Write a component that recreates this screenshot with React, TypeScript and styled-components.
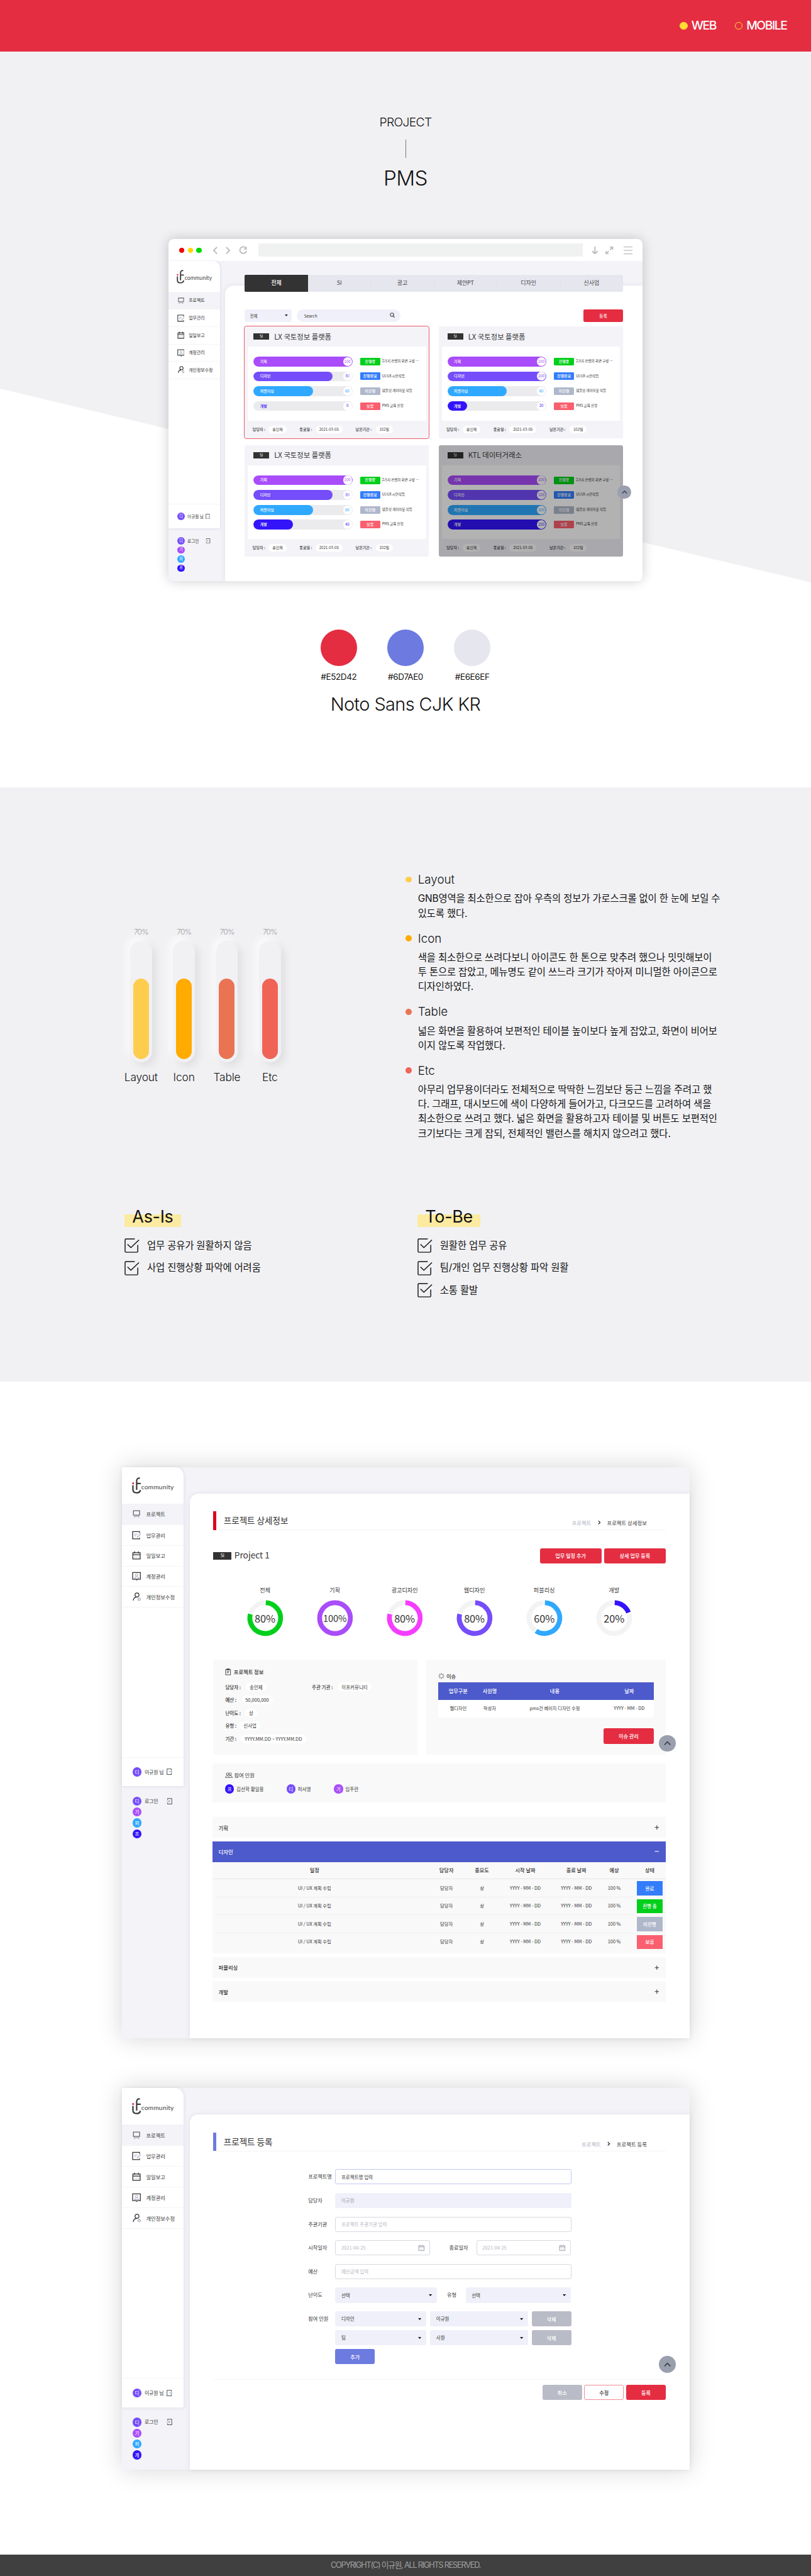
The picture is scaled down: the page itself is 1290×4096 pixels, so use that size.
import React from "react";
import styled, { createGlobalStyle } from "styled-components";

const KR = `"Noto Sans CJK KR", "Noto Sans", sans-serif`;
const MAIN = `Inter, "Noto Sans CJK KR", sans-serif`;

const C = {
  red: "#e52d42",
  blue: "#6d7ae0",
  navy: "#4d5acb",
  mist: "#f1f1f4",
  shell: "#f3f3f8",
  field: "#f0f0fa",
  purple: "#a94dfa",
  violet: "#754dfa",
  sky: "#2fa8ff",
  indigo: "#3314fa",
  pink: "#f53dff",
  green: "#00cf1b",
  azure: "#347dfa",
  slate: "#afb7cb",
  coral: "#fa5f6f",
};

const GlobalStyle = createGlobalStyle`
  *, *::before, *::after { box-sizing: border-box; }
  html, body { margin: 0; padding: 0; background: #fff; }
  svg { display: block; flex: none; }
`;

/* The board is designed 1340px wide and shown at 1290px. */
const Page = styled.div`
  zoom: 0.96269;
  width: 1340px;
  height: 4255px;
  overflow: hidden;
  display: flex;
  flex-direction: column;
  background: #fff;
  font-family: ${MAIN};
  color: #111;
  line-height: 1;
  white-space: nowrap;
`;

/* ---------- top bar ---------- */

const TopBar = styled.header`
  flex: none;
  height: 85px;
  padding: 0 40px;
  display: flex;
  align-items: center;
  justify-content: flex-end;
  gap: 31px;
  background: ${C.red};
`;

const Platform = styled.span`
  display: flex;
  align-items: center;
  gap: 6px;
  color: #fff;
  font-size: 20px;
  font-weight: 500;
  letter-spacing: -1.45px;
`;

const PlatformDot = styled.i<{ $on?: boolean }>`
  width: 13px;
  height: 13px;
  border-radius: 50%;
  border: 1px solid #ffdd33;
  background: ${(p) => (p.$on ? "#ffdd33" : "transparent")};
`;

/* ---------- hero ---------- */

const Hero = styled.section`
  flex: none;
  height: 1216px;
  padding-top: 107px;
  display: flex;
  flex-direction: column;
  align-items: center;
  position: relative;
  isolation: isolate;

  &::before {
    content: "";
    position: absolute;
    inset: 0;
    z-index: -1;
    background: ${C.mist};
    clip-path: polygon(0 0, 100% 0, 100% 877px, 0 557px);
  }
`;

const Eyebrow = styled.p`
  margin: 0;
  font-size: 20px;
  line-height: 20px;
  font-weight: 300;
  letter-spacing: -0.65px;
`;

const Stem = styled.i`
  width: 1px;
  height: 30px;
  margin: 19px 0 15px;
  background: #777;
`;

const HeroTitle = styled.h1`
  margin: 0 0 83px;
  font-size: 34.5px;
  line-height: 36px;
  font-weight: 300;
  letter-spacing: -0.6px;
`;

const Swatches = styled.div`
  margin-top: 80px;
  display: flex;
  gap: 50.3px;
`;

const Swatch = styled.div<{ $c: string }>`
  width: 60px;
  display: flex;
  flex-direction: column;
  align-items: center;
  gap: 11px;
  font-size: 14px;
  line-height: 14px;
  letter-spacing: -0.4px;

  &::before {
    content: "";
    width: 60px;
    height: 60px;
    border-radius: 50%;
    background: ${(p) => p.$c};
  }
`;

const FontName = styled.p`
  margin: 23px 0 0;
  font-size: 30px;
  line-height: 32px;
  font-weight: 300;
  letter-spacing: -0.6px;
`;

/* ---------- browser window ---------- */

const Browser = styled.div`
  flex: none;
  width: 784px;
  height: 565.3px;
  border-radius: 9px;
  overflow: hidden;
  background: #fff;
  box-shadow: 0 0 20px rgba(0, 0, 0, 0.2);
  display: flex;
  flex-direction: column;
`;

const ChromeBar = styled.div`
  flex: none;
  height: 36.5px;
  padding: 0 16.5px 0 18px;
  display: flex;
  align-items: center;
`;

const Light = styled.i<{ $c: string }>`
  width: 8.6px;
  height: 8.6px;
  margin-right: 5.6px;
  border-radius: 50%;
  background: ${(p) => p.$c};
`;

const Address = styled.div`
  flex: 1;
  height: 22.2px;
  margin: 0 13.5px 0 18px;
  background: #f0f2f1;
`;

const ChromeIcon = styled.svg<{ $w: number; $ml?: number }>`
  width: ${(p) => p.$w}px;
  height: ${(p) => p.$w}px;
  margin-left: ${(p) => p.$ml ?? 0}px;
  fill: none;
  stroke: #bdbdbd;
  stroke-width: 2;
`;

/* ---------- application frame ---------- */

const AppFrame = styled.div<{ $h?: number }>`
  position: relative;
  display: flex;
  width: 100%;
  ${(p) => (p.$h ? `height: ${p.$h}px; flex: none;` : "flex: 1;")}
  background: ${C.shell};
  font-family: ${KR};
  color: #333;
`;

const Aside = styled.aside<{ $scale?: number }>`
  zoom: ${(p) => p.$scale ?? 1};
  flex: none;
  width: 102.7px;
`;

const AsideMain = styled.div`
  height: 527.3px;
  display: flex;
  flex-direction: column;
  background: #fff;
  border-top-right-radius: 14px;
  box-shadow: 1px 1px 5px rgba(90, 90, 130, 0.12);
`;

const LogoBox = styled.div`
  height: 60.3px;
  padding: 17px 0 0 17px;
  display: flex;
`;

const LogoWord = styled.span`
  margin: 10.4px 0 0 0.4px;
  font-family: Lato, sans-serif;
  font-size: 10.8px;
  line-height: 12px;
  letter-spacing: 0.1px;
  color: #444;
`;

const MenuItem = styled.div<{ $on?: boolean }>`
  height: ${(p) => (p.$on ? 35.4 : 34.2)}px;
  padding-left: 17.3px;
  display: flex;
  align-items: center;
  gap: 8.4px;
  font-size: 8.6px;
  background: ${(p) => (p.$on ? C.shell : "#fff")};
  border-bottom: 0.8px solid #f4f4f6;
`;

const Account = styled.div<{ $line?: boolean }>`
  display: flex;
  align-items: center;
  height: ${(p) => (p.$line ? 48.3 : 18)}px;
  margin-top: ${(p) => (p.$line ? "auto" : "0")};
  padding: 0 19px 0 18px;
  border-top: ${(p) => (p.$line ? "0.8px solid #f4f4f6" : "0")};
  font-size: 8.2px;
`;

const AccountName = styled.span`
  flex: 1;
  padding-left: 5px;
`;

const Others = styled.div`
  padding-top: 15.6px;
`;

const Avatar = styled.i<{ $c: string }>`
  width: 14.8px;
  height: 14.8px;
  border-radius: 50%;
  display: flex;
  align-items: center;
  justify-content: center;
  background: ${(p) => p.$c};
  color: #fff;
  font-size: 7.8px;
  font-style: normal;
`;

const Panel = styled.main<{ $top: number; $left: number; $pad: string }>`
  flex: 1;
  min-width: 0;
  margin: ${(p) => p.$top}px 0 0 ${(p) => p.$left}px;
  padding: ${(p) => p.$pad};
  background: #fff;
  border-top-left-radius: 14px;
  box-shadow: 0 0 8px rgba(90, 90, 130, 0.14);
`;

const ToTop = styled.button<{ $x: number; $y: number; $d: number }>`
  position: absolute;
  left: ${(p) => p.$x - p.$d / 2}px;
  top: ${(p) => p.$y - p.$d / 2}px;
  width: ${(p) => p.$d}px;
  height: ${(p) => p.$d}px;
  padding: 0;
  border: 0;
  border-radius: 50%;
  display: flex;
  align-items: center;
  justify-content: center;
  background: #9a9fae;

  svg {
    width: 50%;
    height: 50%;
  }
`;

/* ---------- dashboard ---------- */

const Tabs = styled.nav`
  margin-top: -17.5px;
  height: 28.5px;
  display: flex;
  border-radius: 2px;
  overflow: hidden;
  background: #e6e6ef;
`;

const Tab = styled.span<{ $on?: boolean; $bar?: boolean }>`
  flex: 1;
  display: flex;
  align-items: center;
  justify-content: center;
  font-size: 9.3px;
  color: ${(p) => (p.$on ? "#fff" : "#444")};
  font-weight: ${(p) => (p.$on ? 500 : 400)};
  background: ${(p) =>
    p.$on
      ? "#333"
      : p.$bar
        ? "linear-gradient(#dfdfe8, #dfdfe8) left center / 1px 10px no-repeat"
        : "none"};
`;

const FilterRow = styled.div`
  margin: 28.5px 0 8px;
  height: 20.7px;
  display: flex;
  font-size: 6.8px;
`;

const FilterSelect = styled.div`
  width: 77.5px;
  padding: 0 6px 0 8.5px;
  display: flex;
  align-items: center;
  justify-content: space-between;
  border-radius: 3px;
  background: ${C.field};
`;

const SearchBox = styled.div`
  width: 171.5px;
  margin: 0 auto 0 8.3px;
  padding: 0 9px 0 12.3px;
  display: flex;
  align-items: center;
  justify-content: space-between;
  border-radius: 11px;
  background: ${C.field};
`;

const FilterButton = styled.button`
  width: 65.3px;
  border: 0;
  padding: 0;
  border-radius: 2.5px;
  background: ${C.red};
  color: #fff;
  font: 500 6.9px ${KR};
`;

const Cards = styled.div`
  display: grid;
  grid-template-columns: 304.4px 304.4px;
  column-gap: 16px;
  row-gap: 12px;
`;

const Card = styled.article<{ $active?: boolean; $dim?: boolean }>`
  position: relative;
  height: 184px;
  padding: 0 5px;
  border-radius: 3px;
  background: ${C.shell};
  outline: ${(p) => (p.$active ? "1px solid #ee5b6c" : "0")};

  &::after {
    content: "";
    position: absolute;
    inset: 0;
    border-radius: 3px;
    background: ${(p) => (p.$dim ? "rgba(0, 0, 0, 0.3)" : "transparent")};
  }
`;

const CardHead = styled.header`
  height: 33px;
  padding-left: 9.4px;
  display: flex;
  align-items: center;
  gap: 8.3px;
  font-size: 11.8px;
`;

const Badge = styled.span<{ $w: number; $h: number }>`
  width: ${(p) => p.$w}px;
  height: ${(p) => p.$h}px;
  display: flex;
  align-items: center;
  justify-content: center;
  background: #333;
  color: #fff;
  font-size: ${(p) => p.$w * 0.235}px;
`;

const CardBody = styled.div`
  height: 122px;
  padding: 16.3px 9.3px 0;
  display: flex;
  flex-direction: column;
  gap: 8px;
  background: #fff;
`;

const TaskRow = styled.div`
  height: 16.5px;
  display: flex;
  align-items: center;
  font-size: 5.7px;
`;

const Track = styled.div`
  position: relative;
  width: 163.6px;
  height: 16.4px;
  margin-right: 12.4px;
  border-radius: 9px;
  background: #ebebee;
  overflow: hidden;
`;

const Fill = styled.div<{ $c: string }>`
  height: 100%;
  border-radius: 9px;
  background: ${(p) => p.$c};
`;

const TrackOver = styled.div<{ $c: string; $dark?: boolean }>`
  position: absolute;
  inset: 0;
  padding: 0 1px 0 11px;
  display: flex;
  align-items: center;
  justify-content: space-between;
  font-size: 6.3px;
  font-weight: 500;
  color: ${(p) => (p.$dark ? p.$c : "#fff")};

  b {
    width: 14.6px;
    height: 14.6px;
    border-radius: 50%;
    display: flex;
    align-items: center;
    justify-content: center;
    background: #fff;
    color: ${(p) => p.$c};
    font-weight: 400;
  }
`;

const Tag = styled.span<{ $c: string }>`
  width: 33.6px;
  height: 12.5px;
  margin-right: 3.1px;
  border-radius: 1.5px;
  display: flex;
  align-items: center;
  justify-content: center;
  background: ${(p) => p.$c};
  color: #fff;
  font-size: 6.3px;
  font-weight: 500;
`;

const CardFoot = styled.footer`
  height: 29px;
  padding-left: 8px;
  display: grid;
  grid-template-columns: 77.4px 92.7px 1fr;
  align-items: center;
  font-size: 6.3px;
`;

const Pair = styled.span<{ $gap: number; $w?: number }>`
  display: flex;
  align-items: center;
  gap: ${(p) => p.$gap}px;
  font-weight: 500;
  width: ${(p) => (p.$w ? `${p.$w}px` : "auto")};
`;

const Pill = styled.span<{ $h: number; $px: number }>`
  height: ${(p) => p.$h}px;
  padding: 0 ${(p) => p.$px}px;
  border-radius: ${(p) => p.$h / 2}px;
  display: flex;
  align-items: center;
  background: #fff;
  font-weight: 400;
`;

/* ---------- notes ---------- */

const Notes = styled.section`
  flex: none;
  height: 981px;
  padding: 139.8px 0 0 206px;
  background: ${C.mist};
`;

const NotesTop = styled.div`
  height: 553px;
  display: flex;
`;

const Gauges = styled.div`
  width: 464px;
  padding-top: 91px;
  display: flex;
  gap: 11px;
`;

const Gauge = styled.figure`
  margin: 0 0 0 -3px;
  width: 60px;
  display: flex;
  flex-direction: column;
  align-items: center;
  font-size: 18px;
  line-height: 20px;
  font-weight: 300;
  letter-spacing: -0.15px;

  & + & {
    margin-left: 0;
  }

  small {
    font-size: 12.6px;
    line-height: 14px;
    margin-bottom: 8.5px;
    letter-spacing: -0.9px;
    font-weight: 300;
    color: #999;
  }
`;

const Tube = styled.div`
  width: 36px;
  height: 200px;
  margin-bottom: 14.5px;
  padding: 5px;
  border-radius: 18px;
  display: flex;
  align-items: flex-end;
  background: ${C.mist};
  box-shadow: 6px 6px 14px rgba(0, 0, 0, 0.08), -6px -6px 14px rgba(255, 255, 255, 0.75);
`;

const Liquid = styled.div<{ $c: string }>`
  width: 26px;
  height: 70%;
  border-radius: 13px;
  background: ${(p) => p.$c};
`;

const NoteList = styled.div`
  display: flex;
  flex-direction: column;
  gap: 17.4px;
`;

const Note = styled.article<{ $c: string }>`
  position: relative;
  padding-left: 20.5px;

  &::before {
    content: "";
    position: absolute;
    left: 0;
    top: 7px;
    width: 10px;
    height: 10px;
    border-radius: 50%;
    background: ${(p) => p.$c};
  }

  h3 {
    margin: 0 0 7.5px;
    font-size: 19.5px;
    line-height: 24px;
    font-weight: 300;
    letter-spacing: 0;
  }

  p {
    margin: 0;
    font-size: 16px;
    line-height: 24.1px;
    font-weight: 400;
    letter-spacing: -0.16px;
    white-space: pre;
  }
`;

const Compare = styled.div`
  display: grid;
  grid-template-columns: 484px 1fr;
`;

const CompareTitle = styled.h2`
  margin: 0 0 17.5px;
  width: max-content;
  padding: 0 12.5px;
  font-size: 28px;
  line-height: 34px;
  font-weight: 400;
  letter-spacing: -0.3px;
  background: linear-gradient(#fbeaa0, #fbeaa0) 0 12px / 100% 21px no-repeat;
`;

const Check = styled.div`
  height: 24px;
  margin-bottom: 13px;
  display: flex;
  align-items: center;
  gap: 12.5px;
  font-size: 16px;
  font-weight: 400;
  letter-spacing: -0.15px;
`;

/* ---------- screens ---------- */

const Screens = styled.section`
  flex: 1;
  padding-top: 141px;
  display: flex;
  flex-direction: column;
  align-items: center;
  gap: 82.2px;
`;

const Screen = styled.div`
  width: 938px;
  box-shadow: 0 0 38px rgba(0, 0, 0, 0.17);
`;

const TitleRow = styled.div<{ $c: string }>`
  height: 31px;
  padding: 0 31.3px 0 12px;
  border-left: 5.3px solid ${(p) => p.$c};
  display: flex;
  align-items: center;
  justify-content: space-between;
  font-size: 14.1px;
  background: linear-gradient(#f5f5f6, #f5f5f6) bottom / 100% 1px no-repeat;
`;

const Crumbs = styled.span`
  display: flex;
  align-items: center;
  gap: 10.5px;
  padding-top: 7px;
  font-size: 8.7px;

  span:first-child {
    color: #a9aebd;
  }
`;

const ProjectRow = styled.div`
  margin-top: 30px;
  height: 25px;
  display: flex;
  align-items: center;
  gap: 4.6px;
  font-size: 14.2px;
`;

const ProjectName = styled.span`
  flex: 1;
  padding-bottom: 1px;
`;

type Tone = "red" | "gray" | "blue" | "line";
const Btn = styled.button<{ $w: number; $tone?: Tone }>`
  width: ${(p) => p.$w}px;
  height: 25px;
  padding: 0;
  border-radius: 3px;
  font: 500 8.5px ${KR};
  border: ${(p) => (p.$tone === "line" ? "0.9px solid #f08c98" : "0")};
  color: ${(p) => (p.$tone === "line" ? "#333" : "#fff")};
  background: ${(p) =>
    ({ red: C.red, gray: "#b9bbc6", blue: C.blue, line: "#fff" })[p.$tone ?? "red"]};
`;

const Donuts = styled.div`
  margin-top: 39px;
  padding-left: 28px;
  display: flex;
`;

const DonutCell = styled.div`
  width: 115.33px;
  display: flex;
  flex-direction: column;
  align-items: center;
  gap: 11px;
  font-size: 9.5px;
  line-height: 11px;
`;

const DonutBox = styled.div<{ $full: boolean }>`
  display: grid;
  place-items: center;
  font-size: ${(p) => (p.$full ? 15.2 : 17)}px;
  letter-spacing: -0.1px;

  > * {
    grid-area: 1 / 1;
  }
`;

const InfoGrid = styled.div`
  margin-top: 38px;
  display: grid;
  grid-template-columns: 337.7px 396px;
  justify-content: space-between;
`;

const InfoCard = styled.div<{ $pt: number }>`
  height: 157px;
  padding: ${(p) => p.$pt}px 19.7px 0 20px;
  border-radius: 2px;
  background: #f9f9f9;
  font-size: 7.8px;
`;

const CardTitle = styled.div<{ $gap: number; $w?: number; $mb: number }>`
  height: 12px;
  margin-bottom: ${(p) => p.$mb}px;
  display: flex;
  align-items: center;
  gap: ${(p) => p.$gap}px;
  font-size: 8.6px;
  font-weight: ${(p) => p.$w ?? 500};
`;

const InfoLine = styled.div`
  display: flex;
  height: 21.4px;
  align-items: center;
`;

const IssueRow = styled.div<{ $head?: boolean }>`
  height: 29.2px;
  padding-left: 6.6px;
  display: grid;
  grid-template-columns: 53px 51px 164px 82px;
  align-items: center;
  text-align: center;
  background: ${(p) => (p.$head ? C.navy : "#fff")};
  color: ${(p) => (p.$head ? "#fff" : "#333")};
  font-size: ${(p) => (p.$head ? 8.5 : 7.6)}px;
  font-weight: ${(p) => (p.$head ? 500 : 400)};
`;

const Right = styled.div<{ $mt: number; $gap?: number }>`
  margin-top: ${(p) => p.$mt}px;
  display: flex;
  justify-content: flex-end;
  gap: ${(p) => p.$gap ?? 0}px;
`;

const People = styled.div`
  margin: 14.5px 0 24.3px -1.3px;
  height: 64.7px;
  padding: 13.5px 0 0 21px;
  border-radius: 2px;
  background: #f9f9f9;
`;

const PeopleRow = styled.div`
  display: grid;
  grid-template-columns: 101.3px 78.7px 100px;
  font-size: 7.9px;
`;

const Person = styled.span`
  display: flex;
  align-items: center;
  gap: 3.8px;
`;

const Accordion = styled.div`
  margin-left: -1.3px;
  display: flex;
  flex-direction: column;
  gap: 5.8px;
`;

const AccHead = styled.div<{ $open?: boolean }>`
  height: 34.1px;
  padding: 0 11px 0 10px;
  display: flex;
  align-items: center;
  justify-content: space-between;
  background: ${(p) => (p.$open ? C.navy : "#f9f9f9")};
  color: ${(p) => (p.$open ? "#fff" : "#333")};
  font-size: 8.7px;
  font-weight: 500;
`;

const PlanTable = styled.div`
  height: 151.4px;
  background: #f9f9f9;
`;

const PlanRow = styled.div<{ $head?: boolean; $last?: boolean }>`
  height: ${(p) => (p.$head ? 28.8 : 29.6)}px;
  display: grid;
  grid-template-columns: 337.4px 8.8px 81px 36.2px 107.2px 61.4px 64px 1fr;
  align-items: center;
  text-align: center;
  font-size: ${(p) => (p.$head ? 8.5 : 7.6)}px;
  font-weight: ${(p) => (p.$head ? 500 : 400)};
  background: ${(p) =>
    p.$head
      ? "linear-gradient(#e6e6e8, #e6e6e8) bottom / 100% 1px no-repeat"
      : p.$last
        ? "none"
        : "linear-gradient(#efeff1, #efeff1) 5px bottom / 691px 1px no-repeat"};
`;

const State = styled.span<{ $c: string }>`
  justify-self: center;
  width: 42.3px;
  height: 23.6px;
  display: flex;
  align-items: center;
  justify-content: center;
  background: ${(p) => p.$c};
  color: #fff;
  font-size: 7.8px;
  font-weight: 500;
`;

/* ---------- form ---------- */

const Form = styled.div`
  margin: 30px 0 0 157px;
  width: 434.7px;
  display: flex;
  flex-direction: column;
  gap: 14.1px;
`;

const FormRow = styled.div`
  display: grid;
  grid-template-columns: 44.7px 1fr;
  font-size: 8.5px;
`;

const FormLabel = styled.label`
  height: 25px;
  display: flex;
  align-items: center;
`;

const Line = styled.div<{ $gap?: number }>`
  display: flex;
  align-items: center;
  gap: ${(p) => p.$gap ?? 0}px;

  & + & {
    margin-top: 6.3px;
  }
`;

const SideLabel = styled.span<{ $l: number; $w: number }>`
  width: ${(p) => p.$w}px;
  padding-left: ${(p) => p.$l}px;
`;

type Kind = "focus" | "plain" | "fill" | "select";
const Field = styled.div<{ $kind: Kind; $w?: number }>`
  width: ${(p) => (p.$w ? `${p.$w}px` : "100%")};
  height: 25px;
  padding: 0 8px 0 ${(p) => (p.$kind === "select" || p.$kind === "fill" ? 10 : 9)}px;
  display: flex;
  align-items: center;
  justify-content: space-between;
  border-radius: 3px;
  font-size: 7.8px;
  border: ${(p) =>
    p.$kind === "focus" ? "1px solid #c3c8f3" : p.$kind === "plain" ? "1px solid #d8d9df" : "0"};
  background: ${(p) => (p.$kind === "fill" || p.$kind === "select" ? C.field : "#fff")};
  color: ${(p) =>
    p.$kind === "plain" ? "#b4b8c3" : p.$kind === "fill" ? "#9da1ad" : "#333"};
`;

const Divider = styled.hr`
  margin: 24px 0 0;
  height: 1px;
  border: 0;
  background: #f5f5f6;
`;

const Foot = styled.footer`
  flex: none;
  height: 36px;
  display: flex;
  align-items: center;
  justify-content: center;
  background: #404040;
  color: #a0a0a0;
  font-size: 13.2px;
  letter-spacing: -1.25px;
`;

/* ---------- drawings ---------- */

const Logo = () => (
  <svg width="15" height="27" viewBox="0 0 45 81" fill="none" stroke="#3d3d3d" strokeWidth="7">
    <path d="M4.500 39v22c0 11 8 16 18 16 11 0 18-5 19-14" />
    <path d="M39 5c-10-2-16 3-16 13v44M23 31h20" />
    <rect x="1" y="25" width="9" height="9" rx="3" fill={C.red} stroke="none" />
  </svg>
);

const menuIcons = [
  <>
    <path d="M7 7h31v22H7z" stroke="#666" strokeWidth="4" />
    <path d="M10 35h26M15 35l-5 6M30 35l5 6" stroke="#a0a8ba" strokeWidth="4" />
  </>,
  <>
    <path d="M38 12V4H3v37h35v-6" stroke="#333" strokeWidth="4" />
    <path d="M11 17h16M11 25h10" stroke="#a0a8ba" strokeWidth="3" />
    <path d="M26 33l2-6 13-13 3 4-13 13z" stroke="#a0a8ba" strokeWidth="3" />
  </>,
  <>
    <path d="M4 9h37v32H4zM4 19h37M13 2v11M32 2v11" stroke="#2f2f2f" strokeWidth="4" />
    <path d="M11 31h4M20 31h4M30 31h4" stroke="#a0a8ba" strokeWidth="4" />
  </>,
  <>
    <path d="M3 4h39v34H27l-4 4-4-4H3z" stroke="#333" strokeWidth="4" />
    <circle cx="23" cy="16" r="6" stroke="#a0a8ba" strokeWidth="3" />
    <path d="M12 33c1-12 21-12 22 0z" stroke="#a0a8ba" strokeWidth="3" />
  </>,
  <>
    <circle cx="25" cy="13" r="10" stroke="#2f2f2f" strokeWidth="4" />
    <path d="M6 41c1-11 8-17 17-17" stroke="#2f2f2f" strokeWidth="4" />
    <circle cx="36" cy="34" r="6" stroke="#a0a8ba" strokeWidth="4" />
  </>,
];

const MenuIcon = ({ i }: { i: number }) => (
  <svg width="14.8" height="14.8" viewBox="0 0 45 45" fill="none">
    {menuIcons[i]}
  </svg>
);

const DoorIcon = ({ into }: { into?: boolean }) => (
  <svg width="9.6" height="10.5" viewBox="0 0 29 32" fill="none" strokeWidth="3.200">
    {into ? (
      <>
        <path d="M5 9V2h21v28H5v-7" stroke="#555" />
        <path d="M0 16h15M11 11l5 5-5 5" stroke="#a0a8ba" />
      </>
    ) : (
      <>
        <path d="M24 9V2H2v28h22v-7" stroke="#555" />
        <path d="M11 16h16M22 11l5 5-5 5" stroke="#a0a8ba" />
      </>
    )}
  </svg>
);

const Caret = ({ w = 5.4 }: { w?: number }) => (
  <svg width={w} height={w * 0.62} viewBox="0 0 10 6">
    <path d="M0 0h10L5 6z" fill="#222" />
  </svg>
);

const UpIcon = () => (
  <svg viewBox="0 0 20 20" fill="none" stroke="#3b3f4a" strokeWidth="2.600">
    <path d="M3 14l7-7 7 7" />
  </svg>
);

const CalendarIcon = () => (
  <svg width="11" height="11" viewBox="0 0 22 22" fill="none" stroke="#9a9fae" strokeWidth="2">
    <path d="M2 4h18v16H2zM2 8h18M7 1v4M15 1v4" />
    <path d="M6 15h2M10 15h2M14 15h2" />
  </svg>
);

const CheckIcon = () => (
  <svg width="24.500" height="24" viewBox="0 0 24.5 24" fill="none" stroke="#111" strokeWidth="1.500">
    <path d="M17 1H2.500Q1 1 1 2.500v19Q1 23 2.500 23h18q1.500 0 1.500-1.500V11" />
    <path d="M5 9.800l5.600 5.600L24 2.500" />
  </svg>
);

const Chevron = () => (
  <svg width="5" height="8" viewBox="0 0 5 8" fill="none" stroke="#333" strokeWidth="1.400">
    <path d="M.8 1.200L3.800 4 .8 6.800" />
  </svg>
);

const pt = (r: number, deg: number) => {
  const a = ((deg - 90) * Math.PI) / 180;
  return `${(30 + r * Math.cos(a)).toFixed(2)} ${(30 + r * Math.sin(a)).toFixed(2)}`;
};
const arc = (from: number, to: number) =>
  `M${pt(25.4, from)}A25.4 25.4 0 ${to - from > 180 ? 1 : 0} 1 ${pt(25.4, to)}`;

const Donut = ({ name, value, color }: { name: string; value: number; color: string }) => (
  <DonutCell>
    <span>{name}</span>
    <DonutBox $full={value === 100}>
      <svg width="60" height="60" viewBox="0 0 60 60" fill="none" strokeWidth="8">
        {value === 100 ? (
          <circle cx="30" cy="30" r="25.400" stroke={color} />
        ) : (
          <>
            <path d={arc(2, value * 3.6 - 3)} stroke={color} />
            <path d={arc(value * 3.6 + 1.5, 357)} stroke="#f3f3f3" />
          </>
        )}
      </svg>
      <span>{value}%</span>
    </DonutBox>
  </DonutCell>
);

/* ---------- composition ---------- */

const menu = ["프로젝트", "업무관리", "일일보고", "계정관리", "개인정보수정"];

const Sidebar = ({ last, scale }: { last: string; scale?: number }) => (
  <Aside $scale={scale}>
    <AsideMain>
      <LogoBox>
        <Logo />
        <LogoWord>community</LogoWord>
      </LogoBox>
      {menu.map((m, i) => (
        <MenuItem key={m} $on={i === 0}>
          <MenuIcon i={i} />
          {m}
        </MenuItem>
      ))}
      <Account $line>
        <Avatar $c={C.violet}>디</Avatar>
        <AccountName>이규원 님</AccountName>
        <DoorIcon />
      </Account>
    </AsideMain>
    <Others>
      <Account>
        <Avatar $c={C.violet}>디</Avatar>
        <AccountName>로그인</AccountName>
        <DoorIcon into />
      </Account>
      <Account>
        <Avatar $c={C.purple}>기</Avatar>
      </Account>
      <Account>
        <Avatar $c={C.sky}>퍼</Avatar>
      </Account>
      <Account>
        <Avatar $c={C.indigo}>{last}</Avatar>
      </Account>
    </Others>
  </Aside>
);

const tasks = [
  { name: "기획", color: C.purple, tag: "진행중", tagColor: C.green, text: "2가지 컨셉의 화면 구성 ⋯" },
  { name: "디자인", color: C.violet, tag: "진행완료", tagColor: C.azure, text: "UI/UX 시안작업" },
  { name: "퍼블리싱", color: C.sky, tag: "미진행", tagColor: C.slate, text: "탬플릿 레이아웃 작업" },
  { name: "개발", color: C.indigo, tag: "보류", tagColor: C.coral, text: "PMS 교육 진행" },
];

const projects = [
  { title: "LX 국토정보 플랫폼", values: [100, 80, 60, 0], active: true },
  { title: "LX 국토정보 플랫폼", values: [100, 100, 60, 20] },
  { title: "LX 국토정보 플랫폼", values: [100, 80, 60, 40] },
  { title: "KTL 데이터거래소", values: [100, 100, 100, 100], dim: true },
];

const ProjectCard = ({ p }: { p: (typeof projects)[number] }) => (
  <Card $active={p.active} $dim={p.dim}>
    <CardHead>
      <Badge $w={26} $h={10.4}>SI</Badge>
      {p.title}
    </CardHead>
    <CardBody>
      {tasks.map((t, i) => (
        <TaskRow key={t.name}>
          <Track>
            <Fill $c={t.color} style={{ width: `${p.values[i]}%` }} />
            <TrackOver $c={t.color} $dark={p.values[i] === 0}>
              <span>{t.name}</span>
              <b>{p.values[i]}</b>
            </TrackOver>
          </Track>
          <Tag $c={t.tagColor}>{t.tag}</Tag>
          {t.text}
        </TaskRow>
      ))}
    </CardBody>
    <CardFoot>
      <Pair $gap={6}>담당자 :<Pill $h={12.4} $px={6}>송인제</Pill></Pair>
      <Pair $gap={6}>종료일 :<Pill $h={12.4} $px={6}>2021-03-05</Pill></Pair>
      <Pair $gap={7}>남은기간 :<Pill $h={12.4} $px={6}>102일</Pill></Pair>
    </CardFoot>
  </Card>
);

const Dashboard = () => (
  <Browser>
    <ChromeBar>
      <Light $c="#f20000" />
      <Light $c="#ffd400" />
      <Light $c="#00d800" />
      <ChromeIcon $w={13} $ml={10} viewBox="0 0 13 13">
        <path d="M9.500 1L4 6.500 9.500 12" />
      </ChromeIcon>
      <ChromeIcon $w={13} $ml={8} viewBox="0 0 13 13">
        <path d="M4 1l5.500 5.500L4 12" />
      </ChromeIcon>
      <ChromeIcon $w={14} $ml={12.5} viewBox="0 0 14 14">
        <path d="M11.600 3.800A5.500 5.500 0 1 0 12.500 8" />
        <path d="M13 .5v5.500H7.500z" fill="#bdbdbd" stroke="none" />
      </ChromeIcon>
      <Address />
      <ChromeIcon $w={13} viewBox="0 0 13 13">
        <path d="M6.500 0v12M2 7.500L6.500 12 11 7.500" />
      </ChromeIcon>
      <ChromeIcon $w={13} $ml={11} viewBox="0 0 13 13">
        <path d="M7.500 1H12v4.500M12 1L7.500 5.500M5.500 12H1V7.500M1 12l4.500-4.500" strokeWidth="1.800" />
      </ChromeIcon>
      <ChromeIcon $w={15} $ml={17} viewBox="0 0 15 15">
        <path d="M0 1.800h15M0 7.500h15M0 13.200h15" strokeWidth="1.300" />
      </ChromeIcon>
    </ChromeBar>
    <AppFrame>
      <Sidebar last="프" scale={0.837} />
      <Panel $top={40} $left={8} $pad="0 32.7px 0 32.5px">
        <Tabs>
          {["전체", "SI", "광고", "제안PT", "디자인", "신사업"].map((t, i) => (
            <Tab key={t} $on={i === 0} $bar={i > 1}>
              {t}
            </Tab>
          ))}
        </Tabs>
        <FilterRow>
          <FilterSelect>
            전체 <Caret w={5} />
          </FilterSelect>
          <SearchBox>
            Search
            <svg width="9" height="9" viewBox="0 0 9 9" fill="none" stroke="#444" strokeWidth="1.200">
              <circle cx="3.600" cy="3.600" r="2.800" />
              <path d="M5.600 5.600l2.900 2.900" />
            </svg>
          </SearchBox>
          <FilterButton>등록</FilterButton>
        </FilterRow>
        <Cards>
          {projects.map((p, i) => (
            <ProjectCard key={i} p={p} />
          ))}
        </Cards>
      </Panel>
      <ToTop $x={753.7} $y={381.4} $d={22.5}>
        <UpIcon />
      </ToTop>
    </AppFrame>
  </Browser>
);

const PageTitle = ({ title, color }: { title: string; color: string }) => (
  <TitleRow $c={color}>
    {title}
    <Crumbs>
      <span>프로젝트</span>
      <Chevron />
      <span>{title}</span>
    </Crumbs>
  </TitleRow>
);

const Info = ({ k, v, gap, w }: { k: string; v: string; gap: number; w?: number }) => (
  <Pair $gap={gap} $w={w}>
    {k} :<Pill $h={14.4} $px={6.6}>{v}</Pill>
  </Pair>
);

const states: [string, string][] = [
  ["완료", C.azure],
  ["진행 중", C.green],
  ["미진행", C.slate],
  ["보류", C.coral],
];

const Sign = ({ minus }: { minus?: boolean }) => (
  <svg width="8" height="8" viewBox="0 0 8 8" fill="none" stroke={minus ? "#fff" : "#333"} strokeWidth="1.100">
    <path d={minus ? "M.5 4h7" : "M.5 4h7M4 .5v7"} />
  </svg>
);

const DetailScreen = () => (
  <Screen>
    <AppFrame $h={943.6}>
      <Sidebar last="프" />
      <Panel $top={43.7} $left={9.7} $pad="29.3px 39px 0 38.9px">
        <PageTitle title="프로젝트 상세정보" color="#dc001d" />
        <ProjectRow>
          <Badge $w={30.4} $h={12.4}>SI</Badge>
          <ProjectName>Project 1</ProjectName>
          <Btn $w={101.8}>업무 일정 추가</Btn>
          <Btn $w={101.8}>상세 업무 등록</Btn>
        </ProjectRow>
        <Donuts>
          <Donut name="전체" value={80} color={C.green} />
          <Donut name="기획" value={100} color={C.purple} />
          <Donut name="광고디자인" value={80} color={C.pink} />
          <Donut name="웹디자인" value={80} color={C.violet} />
          <Donut name="퍼블리싱" value={60} color={C.sky} />
          <Donut name="개발" value={20} color={C.indigo} />
        </Donuts>
        <InfoGrid>
          <InfoCard $pt={14.5}>
            <CardTitle $gap={4} $mb={8.2}>
              <svg width="10" height="11" viewBox="0 0 20 22" fill="none" stroke="#444" strokeWidth="2">
                <path d="M2 3h16v18H2zM6 1h8v4H6zM6 10h8M6 14h6" />
              </svg>
              프로젝트 정보
            </CardTitle>
            <InfoLine>
              <Info k="담당자" v="송인제" gap={8} w={143} />
              <Info k="주관 기관" v="이프커뮤니티" gap={8} />
            </InfoLine>
            <InfoLine><Info k="예산" v="50,000,000" gap={8} /></InfoLine>
            <InfoLine><Info k="난이도" v="상" gap={7} /></InfoLine>
            <InfoLine><Info k="유형" v="신사업" gap={5} /></InfoLine>
            <InfoLine><Info k="기간" v="YYYY.MM.DD ~ YYYY.MM.DD" gap={7} /></InfoLine>
          </InfoCard>
          <InfoCard $pt={21.5}>
            <CardTitle $gap={3} $mb={4.2}>
              <svg width="10.500" height="10.500" viewBox="-10 -10 20 20" stroke="#444" strokeWidth="2">
                {[0, 45, 90, 135, 180, 225, 270, 315].map((a) => (
                  <path key={a} d="M0-9v4.500" transform={`rotate(${a})`} />
                ))}
              </svg>
              이슈
            </CardTitle>
            <IssueRow $head>
              <span>업무구분</span>
              <span>사원명</span>
              <span>내용</span>
              <span>날짜</span>
            </IssueRow>
            <IssueRow>
              <span>웹디자인</span>
              <span>작성자</span>
              <span>pms건 페이지 디자인 수정</span>
              <span>YYYY - MM - DD</span>
            </IssueRow>
            <Right $mt={18}>
              <Btn $w={83.3}>이슈 관리</Btn>
            </Right>
          </InfoCard>
        </InfoGrid>
        <People>
          <CardTitle $gap={2.5} $w={400} $mb={9.5}>
            <svg width="12.500" height="10" viewBox="0 0 25 20" fill="none" stroke="#444" strokeWidth="1.800">
              <circle cx="8" cy="6" r="4" />
              <circle cx="17" cy="6" r="4" />
              <path d="M1 18c0-8 12-8 13 0zM14 12c5-2 10 1 10 6H14" />
            </svg>
            참여 인원
          </CardTitle>
          <PeopleRow>
            <Person><Avatar $c={C.indigo}>프</Avatar>김선학 황일용</Person>
            <Person><Avatar $c={C.violet}>디</Avatar>허서영</Person>
            <Person><Avatar $c={C.purple}>기</Avatar>임주란</Person>
          </PeopleRow>
        </People>
        <Accordion>
          <AccHead>기획<Sign /></AccHead>
          <div>
            <AccHead $open>디자인<Sign minus /></AccHead>
            <PlanTable>
              <PlanRow $head>
                <span>일정</span>
                <i />
                <span>담당자</span>
                <span>중요도</span>
                <span>시작 날짜</span>
                <span>종료 날짜</span>
                <span>예상</span>
                <span>상태</span>
              </PlanRow>
              {states.map(([s, c], i) => (
                <PlanRow key={s} $last={i === 3}>
                  <span>UI / UX 계획 수립</span>
                  <i />
                  <span>담당자</span>
                  <span>상</span>
                  <span>YYYY - MM - DD</span>
                  <span>YYYY - MM - DD</span>
                  <span>100 %</span>
                  <State $c={c}>{s}</State>
                </PlanRow>
              ))}
            </PlanTable>
          </div>
          <AccHead>퍼블리싱<Sign /></AccHead>
          <AccHead>개발<Sign /></AccHead>
        </Accordion>
      </Panel>
      <ToTop $x={901.7} $y={456.3} $d={27.6}>
        <UpIcon />
      </ToTop>
    </AppFrame>
  </Screen>
);

const FormScreen = () => (
  <Screen>
    <AppFrame $h={630}>
      <Sidebar last="개" />
      <Panel $top={44} $left={9.7} $pad="29.3px 39px 0 38.9px">
        <PageTitle title="프로젝트 등록" color={C.blue} />
        <Form>
          <FormRow>
            <FormLabel>프로젝트명</FormLabel>
            <Field $kind="focus">프로젝트명 입력</Field>
          </FormRow>
          <FormRow>
            <FormLabel>담당자</FormLabel>
            <Field $kind="fill">이규원</Field>
          </FormRow>
          <FormRow>
            <FormLabel>주관기관</FormLabel>
            <Field $kind="plain">프로젝트 주관기관 입력</Field>
          </FormRow>
          <FormRow>
            <FormLabel>시작일자</FormLabel>
            <Line>
              <Field $kind="plain" $w={157}>2021-04-25<CalendarIcon /></Field>
              <SideLabel $l={31.3} $w={76}>종료일자</SideLabel>
              <Field $kind="plain" $w={156.7}>2021-04-25<CalendarIcon /></Field>
            </Line>
          </FormRow>
          <FormRow>
            <FormLabel>예산</FormLabel>
            <Field $kind="plain">예산금액 입력</Field>
          </FormRow>
          <FormRow>
            <FormLabel>난이도</FormLabel>
            <Line>
              <Field $kind="select" $w={168}>선택<Caret /></Field>
              <SideLabel $l={16.7} $w={47.3}>유형</SideLabel>
              <Field $kind="select" $w={174}>선택<Caret /></Field>
            </Line>
          </FormRow>
          <FormRow>
            <FormLabel>참여 인원</FormLabel>
            <div>
              <Line $gap={6}>
                <Field $kind="select" $w={150.7}>디자인<Caret /></Field>
                <Field $kind="select" $w={161.7}>이규원<Caret /></Field>
                <Btn $w={65.5} $tone="gray">삭제</Btn>
              </Line>
              <Line $gap={6}>
                <Field $kind="select" $w={150.7}>팀<Caret /></Field>
                <Field $kind="select" $w={161.7}>사원<Caret /></Field>
                <Btn $w={65.5} $tone="gray">삭제</Btn>
              </Line>
              <Line>
                <Btn $w={65.3} $tone="blue">추가</Btn>
              </Line>
            </div>
          </FormRow>
        </Form>
        <Divider />
        <Right $mt={9} $gap={4}>
          <Btn $w={65.3} $tone="gray">취소</Btn>
          <Btn $w={65.3} $tone="line">수정</Btn>
          <Btn $w={65.3}>등록</Btn>
        </Right>
      </Panel>
      <ToTop $x={901.7} $y={456.3} $d={27.6}>
        <UpIcon />
      </ToTop>
    </AppFrame>
  </Screen>
);

const notes = [
  {
    name: "Layout",
    color: "#ffcd4d",
    text: "GNB영역을 최소한으로 잡아 우측의 정보가 가로스크롤 없이 한 눈에 보일 수\n있도록 했다.",
  },
  {
    name: "Icon",
    color: "#ffab00",
    text: "색을 최소한으로 쓰려다보니 아이콘도 한 톤으로 맞추려 했으나 밋밋해보이\n투 톤으로 잡았고, 메뉴명도 같이 쓰느라 크기가 작아져 미니멀한 아이콘으로\n디자인하였다.",
  },
  {
    name: "Table",
    color: "#ea7354",
    text: "넓은 화면을 활용하여 보편적인 테이블 높이보다 높게 잡았고, 화면이 비어보\n이지 않도록 작업했다.",
  },
  {
    name: "Etc",
    color: "#f06457",
    text: "아무리 업무용이더라도 전체적으로 딱딱한 느낌보단 둥근 느낌을 주려고 했\n다. 그래프, 대시보드에 색이 다양하게 들어가고, 다크모드를 고려하여 색을\n최소한으로 쓰려고 했다. 넓은 화면을 활용하고자 테이블 및 버튼도 보편적인\n크기보다는 크게 잡되, 전체적인 밸런스를 해치지 않으려고 했다.",
  },
];

export default function App() {
  return (
    <>
      <GlobalStyle />
      <Page>
        <TopBar>
          <Platform><PlatformDot $on />WEB</Platform>
          <Platform><PlatformDot />MOBILE</Platform>
        </TopBar>
        <Hero>
          <Eyebrow>PROJECT</Eyebrow>
          <Stem />
          <HeroTitle>PMS</HeroTitle>
          <Dashboard />
          <Swatches>
            <Swatch $c="#e52d42">#E52D42</Swatch>
            <Swatch $c="#6d7ae0">#6D7AE0</Swatch>
            <Swatch $c="#e6e6ef">#E6E6EF</Swatch>
          </Swatches>
          <FontName>Noto Sans CJK KR</FontName>
        </Hero>
        <Notes>
          <NotesTop>
            <Gauges>
              {notes.map((n) => (
                <Gauge key={n.name}>
                  <small>70%</small>
                  <Tube><Liquid $c={n.color} /></Tube>
                  {n.name}
                </Gauge>
              ))}
            </Gauges>
            <NoteList>
              {notes.map((n) => (
                <Note key={n.name} $c={n.color}>
                  <h3>{n.name}</h3>
                  <p>{n.text}</p>
                </Note>
              ))}
            </NoteList>
          </NotesTop>
          <Compare>
            <div>
              <CompareTitle>As-Is</CompareTitle>
              <Check><CheckIcon />업무 공유가 원활하지 않음</Check>
              <Check><CheckIcon />사업 진행상황 파악에 어려움</Check>
            </div>
            <div>
              <CompareTitle>To-Be</CompareTitle>
              <Check><CheckIcon />원활한 업무 공유</Check>
              <Check><CheckIcon />팀/개인 업무 진행상황 파악 원활</Check>
              <Check><CheckIcon />소통 활발</Check>
            </div>
          </Compare>
        </Notes>
        <Screens>
          <DetailScreen />
          <FormScreen />
        </Screens>
        <Foot>COPYRIGHT(C) 이규원, ALL RIGHTS RESERVED.</Foot>
      </Page>
    </>
  );
}
